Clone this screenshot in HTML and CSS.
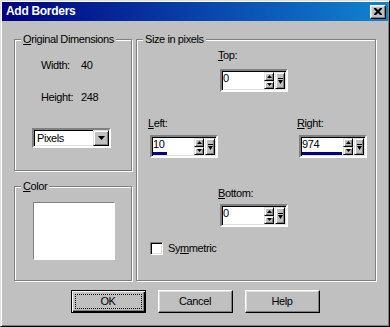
FILE: index.html
```html
<!DOCTYPE html>
<html lang="en">
<head>
    <meta charset="UTF-8">
    <title>Add Borders</title>
    <link rel="stylesheet" href="styles.css">
</head>
<body>
    <div class="window">
        <div class="titlebar">
            <span class="title">Add Borders</span>
            <button class="close" aria-label="Close">
                <svg width="8" height="7" viewBox="0 0 8 7"><path d="M0 0h2l2 2 2-2h2v1l-2.5 2.5L8 6v1H6L4 5 2 7H0V6l2.5-2.5L0 1z" fill="#000"/></svg>
            </button>
        </div>

        <div class="content">
            <div class="main">
                <div class="left-col">
                    <fieldset class="group group-dims">
                        <legend><u>O</u>riginal Dimensions</legend>
                        <div class="dims">
                            <span>Width:</span><span>40</span>
                            <span>Height:</span><span>248</span>
                        </div>
                        <div class="combo">
                            <span class="combo-text">Pixels</span>
                            <span class="combo-btn">
                                <svg width="7" height="4" viewBox="0 0 7 4"><path d="M0 0h7L3.5 4z" fill="#000"/></svg>
                            </span>
                        </div>
                    </fieldset>

                    <fieldset class="group group-color">
                        <legend><u>C</u>olor</legend>
                        <div class="swatch"></div>
                    </fieldset>
                </div>

                <fieldset class="group group-size">
                    <legend>Size in pixels</legend>
                    <div class="sizes">
                        <div class="cell cell-top">
                            <span class="cell-label"><u>T</u>op:</span>
                            <div class="spin">
                                <div class="spin-value"><span>0</span></div>
                                <div class="spin-arrows">
                                    <span class="spin-btn"><svg width="5" height="3" viewBox="0 0 5 3"><path d="M0 3h5L2.5 0z" fill="#000"/></svg></span>
                                    <span class="spin-btn"><svg width="5" height="3" viewBox="0 0 5 3"><path d="M0 0h5L2.5 3z" fill="#000"/></svg></span>
                                </div>
                                <span class="spin-menu"><svg width="5" height="6" viewBox="0 0 5 6"><path d="M0 0h5v1H0zM0 2h5L2.5 6z" fill="#000"/></svg></span>
                            </div>
                        </div>

                        <div class="cell cell-left">
                            <span class="cell-label"><u>L</u>eft:</span>
                            <div class="spin">
                                <div class="spin-value"><span>10</span><i class="bar" style="width: 34%"></i></div>
                                <div class="spin-arrows">
                                    <span class="spin-btn"><svg width="5" height="3" viewBox="0 0 5 3"><path d="M0 3h5L2.5 0z" fill="#000"/></svg></span>
                                    <span class="spin-btn"><svg width="5" height="3" viewBox="0 0 5 3"><path d="M0 0h5L2.5 3z" fill="#000"/></svg></span>
                                </div>
                                <span class="spin-menu"><svg width="5" height="6" viewBox="0 0 5 6"><path d="M0 0h5v1H0zM0 2h5L2.5 6z" fill="#000"/></svg></span>
                            </div>
                        </div>

                        <div class="cell cell-right">
                            <span class="cell-label"><u>R</u>ight:</span>
                            <div class="spin">
                                <div class="spin-value"><span>974</span><i class="bar" style="width: 100%"></i></div>
                                <div class="spin-arrows">
                                    <span class="spin-btn"><svg width="5" height="3" viewBox="0 0 5 3"><path d="M0 3h5L2.5 0z" fill="#000"/></svg></span>
                                    <span class="spin-btn"><svg width="5" height="3" viewBox="0 0 5 3"><path d="M0 0h5L2.5 3z" fill="#000"/></svg></span>
                                </div>
                                <span class="spin-menu"><svg width="5" height="6" viewBox="0 0 5 6"><path d="M0 0h5v1H0zM0 2h5L2.5 6z" fill="#000"/></svg></span>
                            </div>
                        </div>

                        <div class="cell cell-bottom">
                            <span class="cell-label"><u>B</u>ottom:</span>
                            <div class="spin">
                                <div class="spin-value"><span>0</span></div>
                                <div class="spin-arrows">
                                    <span class="spin-btn"><svg width="5" height="3" viewBox="0 0 5 3"><path d="M0 3h5L2.5 0z" fill="#000"/></svg></span>
                                    <span class="spin-btn"><svg width="5" height="3" viewBox="0 0 5 3"><path d="M0 0h5L2.5 3z" fill="#000"/></svg></span>
                                </div>
                                <span class="spin-menu"><svg width="5" height="6" viewBox="0 0 5 6"><path d="M0 0h5v1H0zM0 2h5L2.5 6z" fill="#000"/></svg></span>
                            </div>
                        </div>
                    </div>

                    <div class="check">
                        <span class="checkbox"></span>
                        <span>Sy<u>m</u>metric</span>
                    </div>
                </fieldset>
            </div>

            <div class="buttons">
                <button class="btn btn-default"><span class="btn-label">OK</span></button>
                <button class="btn"><span class="btn-label">Cancel</span></button>
                <button class="btn"><span class="btn-label">Help</span></button>
            </div>
        </div>
    </div>
</body>
</html>
```

FILE: styles.css
```css
* {
    margin: 0;
    padding: 0;
    box-sizing: border-box;
}

body {
    width: 390px;
    height: 327px;
    overflow: hidden;
    background: #c0c0c0;
    font-family: 'Liberation Sans', Arial, sans-serif;
    font-size: 11px;
    line-height: 13px;
    letter-spacing: -0.4px;
    color: #000;
}

u {
    text-decoration: underline;
    text-underline-offset: 1px;
}

.window {
    width: 390px;
    height: 327px;
    display: flex;
    flex-direction: column;
    background: #c0c0c0;
    border: 1px solid;
    border-color: #dfdfdf #000 #000 #dfdfdf;
    box-shadow: inset 1px 1px #fff, inset -1px -1px #808080;
    padding: 1px;
}

/* title bar */
.titlebar {
    height: 19px;
    display: flex;
    align-items: center;
    justify-content: space-between;
    padding: 0 2px 0 4px;
    background: linear-gradient(90deg, #000080 0%, #1084d0 100%);
}

.title {
    color: #fff;
    font-weight: 700;
    font-size: 12px;
    letter-spacing: -0.3px;
}

.close {
    width: 16px;
    height: 14px;
    display: flex;
    align-items: center;
    justify-content: center;
    background: #c0c0c0;
    border: 1px solid;
    border-color: #fff #000 #000 #fff;
    box-shadow: inset -1px -1px #808080, inset 1px 1px #dfdfdf;
}

.content {
    flex: 1;
    display: flex;
    flex-direction: column;
    padding: 12px 12px 0;
}

.main {
    height: 248px;
    display: flex;
    gap: 4px;
}

.left-col {
    width: 118px;
    display: flex;
    flex-direction: column;
    gap: 9px;
}

/* etched group boxes */
.group {
    min-width: 0;
    padding: 0;
    border: 1px solid #808080;
    box-shadow: inset 1px 1px #fff, 1px 1px #fff;
}

.group legend {
    margin-left: 6px;
    padding: 0 2px;
    background: #c0c0c0;
    line-height: 13px;
}

.group-dims {
    height: 138px;
}

.group-color {
    flex: 1;
}

.group-size {
    flex: 1;
}

.dims {
    display: grid;
    grid-template-columns: 40px auto;
    row-gap: 19px;
    margin: 13px 0 0 26px;
}

.combo {
    width: 79px;
    height: 20px;
    margin: 24px 0 0 17px;
    display: flex;
    background: #fff;
    border: 2px solid;
    border-color: #808080 #fff #fff #808080;
    box-shadow: inset 1px 1px #000, inset -1px -1px #dfdfdf;
}

.combo-text {
    flex: 1;
    padding: 2px 0 0 3px;
}

.combo-btn,
.spin-btn,
.spin-menu {
    display: flex;
    align-items: center;
    justify-content: center;
    background: #c0c0c0;
    border: 1px solid;
    border-color: #dfdfdf #000 #000 #dfdfdf;
    box-shadow: inset 1px 1px #fff, inset -1px -1px #808080;
}

.combo-btn {
    width: 16px;
}

.swatch {
    width: 82px;
    height: 58px;
    margin: 9px 0 0 18px;
    background: #fff;
    border: 1px solid;
    border-color: #808080 #fff #fff #808080;
}

/* size controls */
.sizes {
    display: grid;
    grid-template-columns: 70px 79px 72px;
    margin-left: 11px;
}

.cell {
    display: flex;
    flex-direction: column;
    align-items: flex-start;
}

.cell-label {
    margin-bottom: 5px;
}

.cell-top {
    grid-column: 2;
    grid-row: 1;
    margin-top: 3px;
}

.cell-top .cell-label {
    margin-bottom: 7px;
}

.cell-left {
    grid-column: 1;
    grid-row: 2;
    margin-top: 25px;
}

.cell-right {
    grid-column: 3;
    grid-row: 2;
    margin-top: 25px;
}

.cell-bottom {
    grid-column: 2;
    grid-row: 3;
    margin-top: 29px;
}

.cell-bottom .cell-label {
    margin-bottom: 4px;
}

.spin {
    width: 68px;
    height: 23px;
    margin-left: 2px;
    display: flex;
    gap: 1px;
    padding-right: 1px;
    background: #fff;
    border: 2px solid;
    border-color: #808080 #fff #fff #808080;
    box-shadow: inset 1px 1px #000, inset -1px -1px #dfdfdf;
}

.spin-value {
    flex: 1;
    display: flex;
    flex-direction: column;
    align-items: flex-start;
    padding: 1px 0 0 1px;
}

.bar {
    height: 3px;
    margin-top: auto;
    margin-bottom: 1px;
    background: #000080;
}

.spin-arrows {
    width: 10px;
    display: flex;
    flex-direction: column;
    padding: 1px 0;
}

.spin-btn {
    flex: 1;
}

.spin-menu {
    width: 10px;
    margin: 1px 0;
}

.check {
    display: flex;
    align-items: center;
    gap: 5px;
    margin: 15px 0 0 13px;
}

.checkbox {
    width: 13px;
    height: 13px;
    background: #fff;
    border: 1px solid;
    border-color: #808080 #fff #fff #808080;
    box-shadow: inset 1px 1px #000, inset -1px -1px #dfdfdf;
}

/* dialog buttons */
.buttons {
    display: flex;
    justify-content: center;
    gap: 12px;
    margin-top: 9px;
}

.btn {
    width: 75px;
    height: 23px;
    display: flex;
    padding: 3px;
    font: inherit;
    letter-spacing: inherit;
    color: #000;
    background: #c0c0c0;
    border: 1px solid;
    border-color: #fff #000 #000 #fff;
    box-shadow: inset -1px -1px #808080, inset 1px 1px #dfdfdf;
}

.btn-label {
    flex: 1;
    display: flex;
    align-items: center;
    justify-content: center;
    border: 1px solid transparent;
}

.btn-default {
    border-color: #000;
    box-shadow: inset 1px 1px #fff, inset -1px -1px #000, inset -2px -2px #808080;
}

.btn-default .btn-label {
    border: 1px dotted #000;
}
```
